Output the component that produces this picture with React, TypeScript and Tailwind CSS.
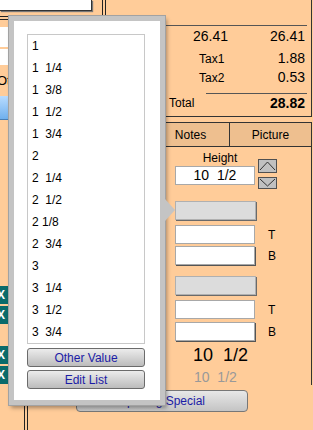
import React from "react";

const sizes = [
  "1",
  "1  1/4",
  "1  3/8",
  "1  1/2",
  "1  3/4",
  "2",
  "2  1/4",
  "2  1/2",
  "2 1/8",
  "2  3/4",
  "3",
  "3  1/4",
  "3  1/2",
  "3  3/4",
];

function Spinner() {
  return (
    <div className="ml-[3px] mt-[8px] flex flex-col gap-[4px]">
      <div className="w-[19px] h-[14px] bg-[#c0c0c0] border border-[#505050]">
        <svg width="17" height="12" viewBox="0 0 17 12">
          <polyline points="1,10 8.5,2 16,10" fill="none" stroke="#333" strokeWidth="1" />
        </svg>
      </div>
      <div className="w-[19px] h-[12px] bg-[#c0c0c0] border border-[#505050]">
        <svg width="17" height="10" viewBox="0 0 17 10">
          <polyline points="1,1 8.5,8 16,1" fill="none" stroke="#333" strokeWidth="1" />
        </svg>
      </div>
    </div>
  );
}

function GrayBar({ className = "" }: { className?: string }) {
  return (
    <div
      className={`ml-[23px] w-[81px] h-[19px] bg-[#dcdcdc] border border-[#b0b0b0] shadow-[1px_1px_0_#6a6a6a] ${className}`}
    />
  );
}

function Field({ label, shadow, className = "" }: { label: string; shadow?: boolean; className?: string }) {
  return (
    <div className={`flex items-center ${className}`}>
      <div
        className={`ml-[23px] w-[80px] h-[19px] bg-white border border-[#a8a8a8] ${
          shadow ? "shadow-[1px_1px_0_#555]" : ""
        }`}
      />
      <span className="ml-[13px] text-[12px]">{label}</span>
    </div>
  );
}

function LeftColumn() {
  return (
    <div className="w-[152px] flex flex-col">
      <div className="flex h-[16px]">
        <div className="w-[92px] h-[11px] bg-white border-r border-b border-[#333] shadow-[1px_1px_1px_#777]" />
        <div className="ml-[10px] w-[4px] h-[16px] border-x border-[#222]" />
      </div>
      <div className="h-[4px] border-y border-[#222]" />
      <div className="mt-[7px] h-[20px] w-[110px] bg-white" />
      <div className="mt-[2px] h-[16px] w-[110px] bg-white" />
      <div className="h-[31px] flex items-center overflow-hidden">
        <span className="-ml-[3px] text-[13px] leading-none">Ot</span>
      </div>
      <div className="h-[24px] w-[110px] bg-gradient-to-b from-[#b9dcff] to-[#6fb0ee] border-b border-[#4a7fb5]" />
      <div className="mt-[166px] flex flex-col gap-[2px]">
        {[0, 1].map((i) => (
          <div key={i} className="w-[8px] h-[18px] bg-[#0b6b6b] overflow-hidden flex items-center justify-end">
            <span className="mr-[3px] text-white font-bold text-[12px] leading-none">X</span>
          </div>
        ))}
      </div>
      <div className="mt-[22px] flex flex-col gap-[2px]">
        {[0, 1].map((i) => (
          <div key={i} className="w-[8px] h-[18px] bg-[#0b6b6b] overflow-hidden flex items-center justify-end">
            <span className="mr-[3px] text-white font-bold text-[12px] leading-none">X</span>
          </div>
        ))}
      </div>
    </div>
  );
}

function RightColumn() {
  return (
    <div className="w-[161px] flex flex-col">
      {/* totals */}
      <div className="mr-[1px] h-[117px] border-r border-b border-[#333] flex flex-col">
        <div className="mt-[25px] ml-[11px] mr-[4px] border-t border-[#555]" />
        <div className="h-[20px] flex items-center text-[14px]">
          <span className="w-[76px] text-right">26.41</span>
          <span className="flex-1 text-right pr-[6px]">26.41</span>
        </div>
        <div className="h-[19px] mt-[3px] flex items-center">
          <span className="pl-[47px] w-[76px] text-[12px]">Tax1</span>
          <span className="flex-1 text-right pr-[6px] text-[14px]">1.88</span>
        </div>
        <div className="h-[19px] flex items-center">
          <span className="pl-[47px] w-[76px] text-[12px]">Tax2</span>
          <span className="flex-1 text-right pr-[6px] text-[14px]">0.53</span>
        </div>
        <div className="mt-[6px] ml-[54px] mr-[4px] border-t border-[#555]" />
        <div className="h-[18px] flex items-center">
          <span className="pl-[17px] text-[12px]">Total</span>
          <span className="flex-1 text-right pr-[6px] text-[14px] font-bold">28.82</span>
        </div>
      </div>

      {/* tabs */}
      <div className="mt-[5px] mr-[1px] h-[25px] flex bg-[#eebf8f] border-y border-r border-[#333] text-[12px]">
        <div className="w-[78px] flex items-center justify-center border-r border-[#333]">Notes</div>
        <div className="flex-1 flex items-center justify-center">Picture</div>
      </div>

      {/* picture panel */}
      <div className="mr-[1px] flex-1 border-r border-[#333] flex flex-col">
        <div className="mt-[4px] flex items-start">
          <div className="ml-[23px] flex flex-col">
            <span className="h-[15px] text-[12px] leading-[15px] text-center pl-[10px]">Height</span>
            <div className="w-[80px] h-[19px] bg-white border border-[#a8a8a8] flex items-center justify-center text-[14px] whitespace-pre">
              10  1/2
            </div>
          </div>
          <Spinner />
        </div>
        <GrayBar className="mt-[12px]" />
        <Field label="T" className="mt-[5px]" />
        <Field label="B" shadow className="mt-[2px]" />
        <GrayBar className="mt-[11px]" />
        <Field label="T" className="mt-[5px]" />
        <Field label="B" shadow className="mt-[3px]" />
        <div className="mt-[4px] h-[20px] pl-[41px] text-[18px] leading-[20px] whitespace-pre">10  1/2</div>
        <div className="mt-[4px] h-[16px] pl-[42px] text-[14px] leading-[16px] text-[#999] whitespace-pre">10  1/2</div>
      </div>
    </div>
  );
}

function Popup() {
  return (
    <>
      <div className="absolute left-[9px] top-[16px] w-[156px] h-[389px] bg-white border-[5px] border-[#c4c4c4] ring-1 ring-[#a2a2a2] shadow-[2px_3px_4px_rgba(0,0,0,0.35)] pt-[13px] pl-[13px] pr-[15px] flex flex-col">
        <div className="h-[310px] border border-[#c8c8c8] flex flex-col">
          {sizes.map((s) => (
            <div key={s} className="h-[22px] leading-[22px] pl-[4px] text-[12px] whitespace-pre">
              {s}
            </div>
          ))}
        </div>
        <button className="mt-[4px] h-[19px] rounded-[3px] border border-[#6b6b6b] bg-gradient-to-b from-[#ececec] to-[#bcbcbc] text-[12px] text-[#1c1ca6] leading-none">
          Other Value
        </button>
        <button className="mt-[3px] h-[19px] rounded-[3px] border border-[#6b6b6b] bg-gradient-to-b from-[#ececec] to-[#bcbcbc] text-[12px] text-[#1c1ca6] leading-none">
          Edit List
        </button>
      </div>
      <div className="absolute left-[165px] top-[199px] w-0 h-0 border-y-[11px] border-y-transparent border-l-[10px] border-l-[#c4c4c4]" />
    </>
  );
}

export default function App() {
  return (
    <div className="relative w-[313px] h-[430px] overflow-hidden bg-[#ffcc99] font-['Liberation_Sans',Arial,sans-serif] text-black">
      <div className="flex h-[385px]">
        <LeftColumn />
        <RightColumn />
      </div>
      <div className="flex h-[45px]">
        <div className="ml-[24px] mt-[20px] w-[4px] h-[25px] border-x border-[#222]" />
        <button className="ml-[48px] mt-[5px] w-[172px] h-[22px] rounded-[4px] border border-[#777] bg-gradient-to-b from-[#e8e8e8] to-[#c4c4c4] text-[12px] text-[#1c1ca6] leading-none">
          Spacing Special
        </button>
      </div>
      <Popup />
    </div>
  );
}
